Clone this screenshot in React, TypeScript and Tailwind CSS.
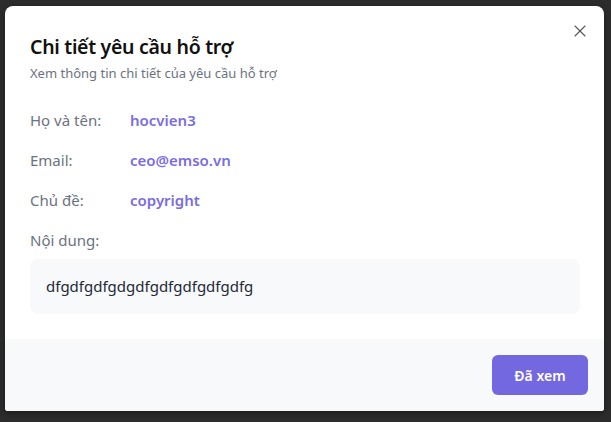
import { X } from "lucide-react";

type Field = {
  label: string;
  value: string;
};

const fields: Field[] = [
  { label: "Họ và tên:", value: "hocvien3" },
  { label: "Email:", value: "ceo@emso.vn" },
  { label: "Chủ đề:", value: "copyright" },
];

function App() {
  return (
    <div className="h-screen w-full overflow-hidden bg-[#2c2c2c] pt-[6px] pl-[5px] font-['Noto_Sans',sans-serif]">
      <div className="relative w-[599px] h-[405px] flex flex-col bg-white rounded-t-lg rounded-b-[3px] overflow-hidden shadow-[0_2px_6px_rgba(0,0,0,0.4)]">
        <button className="absolute top-[15px] right-[14px] text-[#555]">
          <X size={20} strokeWidth={1.3} />
        </button>

        <div className="flex flex-col pt-[27px] pl-[25px] pr-[24px]">
          <h2 className="text-[19.5px] leading-[28px] font-semibold tracking-[-0.3px] text-[#111]">Chi tiết yêu cầu hỗ trợ</h2>
          <p className="mt-[2px] text-[13px] leading-[20px] text-[#6b7280]">Xem thông tin chi tiết của yêu cầu hỗ trợ</p>

          <div className="mt-[25px] flex flex-col gap-4">
            {fields.map(f => (
              <div key={f.label} className="flex items-center h-6">
                <span className="w-[100px] text-[15px] text-[#6b7280]">{f.label}</span>
                <span className="text-[15px] font-semibold text-[#7a6de0]">{f.value}</span>
              </div>
            ))}
            <div className="h-6 flex items-center text-[15px] text-[#6b7280]">Nội dung:</div>
          </div>

          <div className="mt-[7px] h-[55px] flex items-center px-4 rounded-lg bg-[#f8f9fb] text-[15px] text-[#1f2937]">
            dfgdfgdfgdgdfgdfgdfgdfgdfg
          </div>
        </div>

        <div className="mt-auto h-[72px] flex items-center justify-end pr-4 bg-[#f8f9fb]">
          <button className="w-[96px] h-10 rounded-md bg-[#7468e0] text-white text-[14px] font-semibold">
            Đã xem
          </button>
        </div>
      </div>
    </div>
  );
}

export default App;
